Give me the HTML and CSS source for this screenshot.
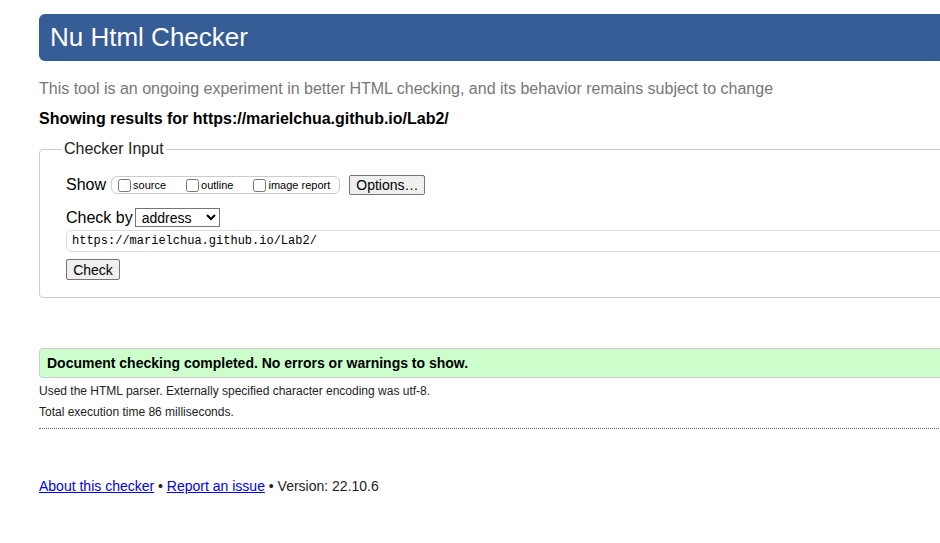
FILE: index.html
```html
<!DOCTYPE html>
<html lang="en">
<head>
<meta charset="utf-8">
<title>Showing results for https://marielchua.github.io/Lab2/ - Nu Html Checker</title>
<link rel="stylesheet" href="styles.css">
</head>
<body>
<div class="page">
  <h1 class="title">Nu Html Checker</h1>
  <p class="intro">This tool is an ongoing experiment in better HTML checking, and its behavior remains subject to change</p>
  <p class="showing">Showing results for https://marielchua.github.io/Lab2/</p>
  <fieldset class="input-box">
    <legend class="legend">Checker Input</legend>
    <div class="row show-row">
      <span class="row-label">Show</span>
      <span class="opts">
        <label class="opt"><input type="checkbox" class="cb">source</label>
        <label class="opt"><input type="checkbox" class="cb">outline</label>
        <label class="opt"><input type="checkbox" class="cb">image report</label>
      </span>
      <button class="btn options-btn" type="button">Options…</button>
    </div>
    <div class="row checkby-row">
      <span class="row-label">Check by</span>
      <select class="sel"><option>address</option></select>
    </div>
    <div class="url-row">
      <input class="url" type="text" value="https://marielchua.github.io/Lab2/">
    </div>
    <div class="submit-row">
      <button class="btn check-btn" type="button">Check</button>
    </div>
  </fieldset>
  <div class="success">Document checking completed. No errors or warnings to show.</div>
  <p class="details">Used the HTML parser. Externally specified character encoding was utf-8.</p>
  <p class="details">Total execution time 86 milliseconds.</p>
  <hr class="dotted">
  <p class="footer"><a href="#" class="link">About this checker</a> • <a href="#" class="link">Report an issue</a> • Version: 22.10.6</p>
</div>
</body>
</html>
```
FILE: styles.css
```css
html, body {
  overflow: hidden;
}
body {
  margin: 0;
  padding: 14px 0 0 39px;
  font-family: "Liberation Sans", Arial, sans-serif;
  color: #000;
  background: #fff;
}
.page {
  width: 1000px;
}
.title {
  margin: 0;
  background: #365d95;
  color: #fff;
  font-weight: normal;
  font-size: 26px;
  line-height: 47px;
  padding: 0 11px;
  border-radius: 6px;
}
.intro {
  margin: 18px 0 0;
  color: #777;
  font-size: 16px;
  line-height: 20px;
}
.showing {
  margin: 10px 0 0;
  font-weight: bold;
  font-size: 16px;
  line-height: 20px;
}
.input-box {
  margin: 11px 0 0;
  border: 1px solid #ccc;
  border-radius: 4px;
  padding: 17px 26px 16px;
}
.legend {
  padding: 0 2px;
  margin-left: -4px;
  font-size: 16px;
  color: #222;
}
.row {
  display: flex;
  align-items: center;
}
.row-label {
  font-size: 16px;
}
.opts {
  display: inline-flex;
  align-items: center;
  margin-left: 5px;
  border: 1px solid #ccc;
  border-radius: 6px;
  height: 16px;
  padding: 0 9px 0 3px;
  font-size: 11px;
}
.opt {
  display: inline-flex;
  align-items: center;
  margin-right: 17px;
}
.opt:last-child {
  margin-right: 0;
}
.cb {
  margin: 0 2px 0 3px;
  width: 13px;
  height: 13px;
}
.btn {
  font-family: "Liberation Sans", Arial, sans-serif;
  font-size: 14px;
  background: #efefef;
  border: 1px solid #767676;
  border-radius: 2px;
  padding: 0 6px;
  height: 20px;
  color: #000;
}
.options-btn {
  margin-left: 9px;
  width: 76px;
}
.checkby-row {
  margin-top: 13px;
}
.sel {
  margin-left: 2px;
  width: 85px;
  height: 19px;
  font-family: "Liberation Sans", Arial, sans-serif;
  font-size: 14px;
  border: 1px solid #767676;
  border-radius: 0;
  padding: 0 0 0 2px;
  background: #fff;
}
.url-row {
  margin-top: 3px;
}
.url {
  display: block;
  width: 100%;
  box-sizing: border-box;
  height: 22px;
  border: 1px solid #ddd;
  border-radius: 5px;
  padding: 0 5px;
  font-family: "Liberation Mono", "DejaVu Sans Mono", monospace;
  font-size: 12px;
  color: #000;
}
.submit-row {
  margin-top: 7px;
}
.check-btn {
  width: 54px;
  height: 21px;
}
.input-box {
  padding-bottom: 17px;
}
.success {
  margin-top: 50px;
  background: #ccffcc;
  border: 1px solid #ccc;
  border-radius: 4px;
  font-weight: bold;
  font-size: 14px;
  line-height: 28px;
  padding: 0 7px;
}
.details {
  margin: 5px 0 0;
  font-size: 12px;
  line-height: 16px;
  color: #222;
}
.details + .details {
  margin-top: 5px;
}
.dotted {
  margin: 8px 0 0;
  border: 0;
  border-top: 1px dotted #666;
  height: 0;
}
.footer {
  margin: 48px 0 0;
  font-size: 14px;
  line-height: 18px;
  color: #222;
}
.link {
  color: #0000ee;
  text-decoration: underline;
}
```
